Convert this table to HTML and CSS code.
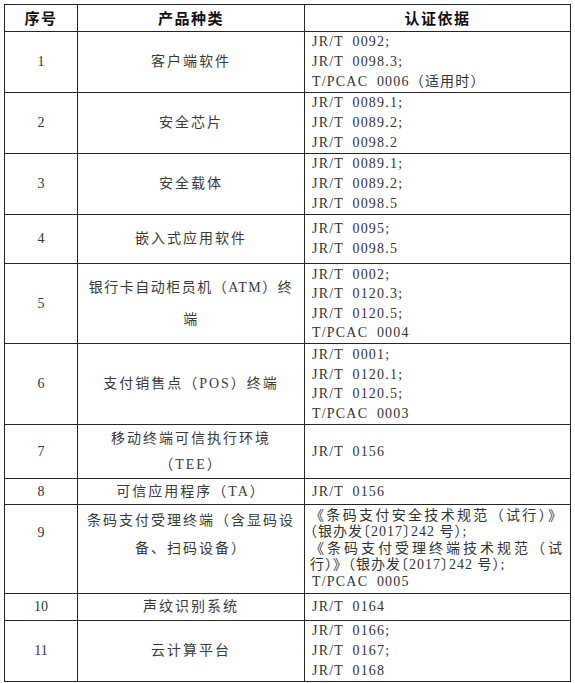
FILE: index.html
```html
<!DOCTYPE html>
<html lang="zh-CN">
<head>
<meta charset="utf-8">
<title>认证依据</title>
<link rel="stylesheet" href="styles.css">
</head>
<body>
<table class="cert">
  <colgroup><col class="c1"><col class="c2"><col class="c3"></colgroup>
  <thead>
    <tr class="h-head"><th>序号</th><th>产品种类</th><th>认证依据</th></tr>
  </thead>
  <tbody>
    <tr class="h60"><td class="num">1</td><td class="name">客户端软件</td><td class="basis">JR/T 0092;<br>JR/T 0098.3;<br>T/PCAC 0006（适用时）</td></tr>
    <tr class="h60"><td class="num">2</td><td class="name">安全芯片</td><td class="basis">JR/T 0089.1;<br>JR/T 0089.2;<br>JR/T 0098.2</td></tr>
    <tr class="h61"><td class="num">3</td><td class="name">安全载体</td><td class="basis">JR/T 0089.1;<br>JR/T 0089.2;<br>JR/T 0098.5</td></tr>
    <tr class="h49"><td class="num">4</td><td class="name">嵌入式应用软件</td><td class="basis">JR/T 0095;<br>JR/T 0098.5</td></tr>
    <tr class="h80"><td class="num">5</td><td class="name tall">银行卡自动柜员机（ATM）终<br>端</td><td class="basis four">JR/T 0002;<br>JR/T 0120.3;<br>JR/T 0120.5;<br>T/PCAC 0004</td></tr>
    <tr class="h81"><td class="num">6</td><td class="name">支付销售点（POS）终端</td><td class="basis four">JR/T 0001;<br>JR/T 0120.1;<br>JR/T 0120.5;<br>T/PCAC 0003</td></tr>
    <tr class="h54"><td class="num">7</td><td class="name mid">移动终端可信执行环境<br>（TEE）</td><td class="basis">JR/T 0156</td></tr>
    <tr class="h26"><td class="num">8</td><td class="name">可信应用程序（TA）</td><td class="basis">JR/T 0156</td></tr>
    <tr class="h89"><td class="num top9">9</td><td class="name top">条码支付受理终端（含显码设<br>备、扫码设备）</td><td class="basis dense"><span class="ln just">《条码支付安全技术规范（试行）》</span><span class="ln halt">（银办发〔2017〕242 号）;</span><span class="ln just">《条码支付受理终端技术规范（试</span><span class="ln">行）》<span class="halt">（银办发〔2017〕242 号）;</span></span><span class="ln latin">T/PCAC 0005</span></td></tr>
    <tr class="h27"><td class="num">10</td><td class="name">声纹识别系统</td><td class="basis">JR/T 0164</td></tr>
    <tr class="h60"><td class="num">11</td><td class="name">云计算平台</td><td class="basis">JR/T 0166;<br>JR/T 0167;<br>JR/T 0168</td></tr>
  </tbody>
</table>
</body>
</html>
```
FILE: styles.css
```css
html, body {
  margin: 0;
  padding: 0;
  background: #fff;
}

.cert {
  border-collapse: collapse;
  table-layout: fixed;
  width: 566px;
  margin: 4px 0 0 4px;
  font-family: "Liberation Serif", "Noto Sans CJK SC", serif;
  font-size: 14px;
  color: #333;
}

.c1 { width: 73px; }
.c2 { width: 227px; }
.c3 { width: 266px; }

.cert th,
.cert td {
  border: 1px solid #262626;
  padding: 0;
  vertical-align: middle;
}

.cert th {
  font-family: "Noto Sans CJK SC", sans-serif;
  font-size: 15px;
  font-weight: bold;
  color: #111;
  letter-spacing: 1.5px;
  text-align: center;
  line-height: 20px;
}

.h-head { height: 27px; }
.h26 { height: 26px; }
.h27 { height: 27px; }
.h49 { height: 49px; }
.h54 { height: 54px; }
.h60 { height: 60px; }
.h61 { height: 61px; }
.h80 { height: 80px; }
.h81 { height: 81px; }
.h89 { height: 89px; }

.cert td.num {
  text-align: center;
  font-size: 14px;
  color: #333;
}

.cert td.name {
  text-align: center;
  letter-spacing: 2px;
  line-height: 20px;
  white-space: nowrap;
  color: #3a3a3a;
}

.cert td.tall { line-height: 32px; letter-spacing: 1.5px; }
.cert td.mid { line-height: 26px; }

.cert td.top {
  vertical-align: top;
  line-height: 28px;
  padding-top: 2px;
}

.cert td.top9 {
  vertical-align: top;
  line-height: 28px;
  padding-top: 14px;
}

.cert td.basis {
  padding-left: 7px;
  line-height: 20px;
  letter-spacing: 1.2px;
  word-spacing: 4px;
  white-space: nowrap;
  color: #333;
}

.cert td.four { line-height: 19.5px; }

.cert td.dense {
  line-height: 16.5px;
  letter-spacing: 1px;
  word-spacing: 0;
  padding-left: 5px;
}

.dense .ln {
  display: block;
  width: 252px;
}

.dense .just {
  text-align-last: justify;
  letter-spacing: 0;
}

.dense .halt {
  font-feature-settings: "halt";
}

.dense .latin {
  padding-left: 2px;
  letter-spacing: 1.2px;
  word-spacing: 4px;
}
```
